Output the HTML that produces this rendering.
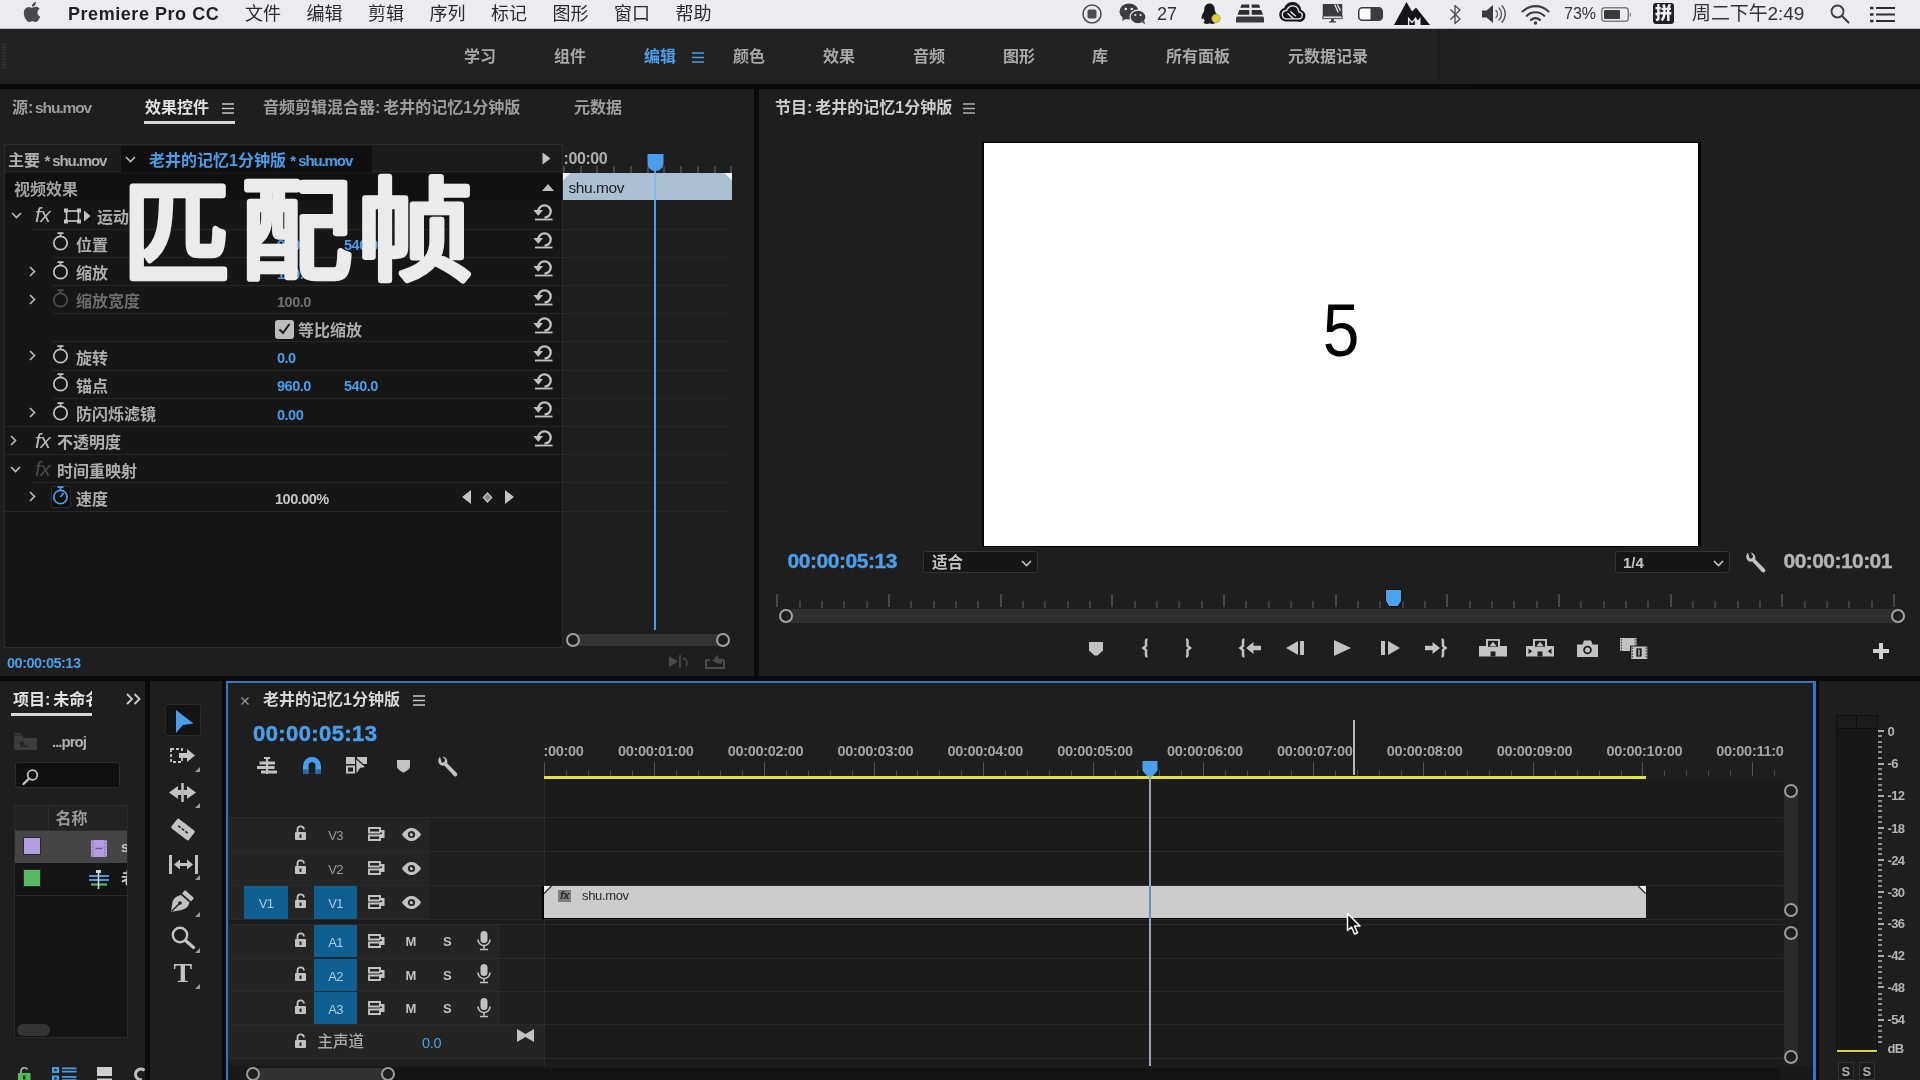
<!DOCTYPE html>
<html lang="zh-CN">
<head>
<meta charset="utf-8">
<title>Premiere Pro CC</title>
<style>
*{box-sizing:border-box;margin:0;padding:0}
html,body{width:1920px;height:1080px;overflow:hidden;background:#0b0a0a}
body{position:relative;font-family:"Liberation Sans","Noto Sans CJK SC",sans-serif;color:#a9a9a9;font-size:15px}
.a{position:absolute}
body>*{will-change:transform}
.t{position:absolute;white-space:nowrap;line-height:1}
.cj{font-family:"Liberation Sans","Noto Sans CJK SC",sans-serif}
svg{position:absolute;overflow:visible}
/* menubar */
#menubar{left:0;top:0;width:1920px;height:29px;background:#ececee;border-bottom:1px solid #bdbdbf}
#menubar .t{color:#2a2a2a;font-size:18px;top:5px}
/* workspace bar */
#wsbar{left:0;top:29px;width:1920px;height:55px;background:#222}
#wsbar .t{font-size:16px;font-weight:700;color:#a8a8a8;top:20px}
/* panels */
.panel{background:#1e1e1e}
.tab{font-size:16px;font-weight:700;color:#9d9d9d;word-spacing:-1.5px}
.lbl{font-size:16px;font-weight:700;color:#aeaeae}
.lat{letter-spacing:-1.1px;font-size:15px}
.val{font-size:14.5px;font-weight:700;color:#4a9eea;letter-spacing:-0.5px}
.blue{color:#4a9eea}
</style>
</head>
<body>
<!-- ===== MENUBAR ===== -->
<div id="menubar" class="a">
<svg style="left:22px;top:2px" width="20" height="20" viewBox="0 0 24 24"><path fill="#4a4a4a" d="M12.152 6.896c-.948 0-2.415-1.078-3.960-1.040-2.040.027-3.910 1.183-4.961 3.014-2.117 3.675-.546 9.103 1.519 12.090 1.013 1.454 2.208 3.090 3.792 3.039 1.520-.065 2.090-.987 3.935-.987 1.831 0 2.350.987 3.960.948 1.637-.026 2.676-1.480 3.676-2.948 1.156-1.688 1.636-3.325 1.662-3.415-.039-.013-3.182-1.221-3.220-4.857-.026-3.040 2.480-4.494 2.597-4.559-1.429-2.090-3.623-2.324-4.390-2.376-2-.156-3.675 1.090-4.610 1.090zM15.530 3.830c.843-1.012 1.400-2.427 1.245-3.830-1.207.052-2.662.805-3.532 1.818-.780.896-1.454 2.338-1.273 3.714 1.338.104 2.715-.688 3.559-1.701"/></svg>
<span class="t" style="left:68px;top:5px;font-weight:700;font-size:18px;letter-spacing:0.55px;color:#1f1f1f">Premiere Pro CC</span>
<span class="t" style="left:245px">文件</span>
<span class="t" style="left:306.500px">编辑</span>
<span class="t" style="left:368px">剪辑</span>
<span class="t" style="left:429.500px">序列</span>
<span class="t" style="left:491px">标记</span>
<span class="t" style="left:552.500px">图形</span>
<span class="t" style="left:614px">窗口</span>
<span class="t" style="left:675.500px">帮助</span>

<!-- record -->
<svg style="left:1081px;top:3px" width="22" height="22" viewBox="0 0 22 22"><circle cx="11" cy="11" r="9" fill="none" stroke="#4d4d4d" stroke-width="1.500"/><rect x="6.500" y="6.500" width="9" height="9" rx="2" fill="#4d4d4d"/></svg>
<!-- wechat -->
<svg style="left:1119px;top:3px" width="28" height="22" viewBox="0 0 28 22"><ellipse cx="10" cy="8.500" rx="9.500" ry="8" fill="#3c3c3c"/><path d="M4 14l-1 4 4.500-2.500z" fill="#3c3c3c"/><ellipse cx="19" cy="14" rx="8" ry="6.800" fill="#3c3c3c" stroke="#ececee" stroke-width="1.200"/><path d="M23 19l3 2.500-.8-4z" fill="#3c3c3c"/><circle cx="6.800" cy="6" r="1.300" fill="#ececee"/><circle cx="12.800" cy="6" r="1.300" fill="#ececee"/><circle cx="16.300" cy="12" r="1.100" fill="#ececee"/><circle cx="21.500" cy="12" r="1.100" fill="#ececee"/></svg>
<span class="t" style="left:1157px;top:5px;font-size:18px;color:#333">27</span>
<!-- qq -->
<svg style="left:1199px;top:2px" width="24" height="24" viewBox="0 0 24 24"><path d="M10.500 1.500c3.200 0 5.200 2.500 5.200 6 0 1 .3 1.800.8 2.800 1 1.800 2 3.700 2 5.700 0 .9-.4 1.300-.8 1.200-.4-.1-.8-.7-1.100-1.300-.3 1.300-.9 2.300-1.700 3.100.9.400 1.500.9 1.500 1.500 0 .9-1.600 1.400-3.300 1.400-1.100 0-2-.2-2.600-.6-.6.400-1.500.6-2.600.6-1.700 0-3.300-.5-3.300-1.400 0-.6.600-1.100 1.500-1.500-.8-.8-1.400-1.800-1.700-3.100-.3.600-.7 1.200-1.100 1.300-.4.100-.8-.3-.8-1.200 0-2 1-3.900 2-5.700.5-1 .8-1.800.8-2.800 0-3.500 2-6 5.200-6z" fill="#1a1a1a"/><circle cx="17" cy="16.500" r="4.200" fill="#e6cf2a"/><circle cx="17" cy="16.500" r="4.200" fill="none" stroke="#9a9a80" stroke-width="0.800"/></svg>
<!-- keyboard-ish -->
<svg style="left:1236px;top:4px" width="28" height="19" viewBox="0 0 28 19"><path d="M5.500 .5h7.800v3.200H4.300zM15.700 .5h7.300l1.200 3.200h-8.500zM3.300 6h10v4.800H1.500zM15.700 6h9.500l1.800 4.800H15.700z" fill="#2e2e2e"/><path d="M0.800 12.500h26.400l.8 1.500v4.500H0V14z" fill="#3a3a3a"/></svg>
<!-- creative cloud -->
<svg style="left:1278px;top:4px" width="26" height="18" viewBox="0 0 26 18"><path d="M8 17.600a7 7 0 0 1-1.800-13.700A8.800 8.800 0 0 1 23.300 6 6.100 6.100 0 0 1 19.500 17.600z" fill="#161616"/><path d="M8.300 14.800a4.200 4.200 0 0 1-.7-8.300l1.200-.3.500-1.100a6 6 0 0 1 11.200 1.400l.3 1.300.9.400a3.400 3.400 0 0 1-1.700 6.600z" fill="none" stroke="#ececee" stroke-width="1.300"/><path d="M9.500 9.200l6 5.600M12.300 7.300l5.500 5" stroke="#ececee" stroke-width="1.300"/></svg>
<!-- display -->
<svg style="left:1321px;top:4px" width="23" height="19.500" viewBox="0 0 24 22"><path d="M1 0h22v13.500H1z" fill="#3a3a3a"/><path d="M1 13.500h22v3H1z" fill="#d8d8da" stroke="#3a3a3a" stroke-width="1"/><path d="M14.500 0.500l4 9M17.500 0.500l3.500 7" stroke="#ececee" stroke-width="1.400"/><path d="M10.500 16.500h3v3h2.500v1.500h-8v-1.500h2.500z" fill="#3a3a3a"/></svg>
<!-- toggle -->
<svg style="left:1358px;top:7px" width="25" height="14" viewBox="0 0 25 14"><rect x="0.750" y="0.750" width="23.500" height="12.500" rx="3.500" fill="#fafafa" stroke="#3c3c3c" stroke-width="1.500"/><path d="M12.500 1h8a3.500 3.500 0 0 1 3.500 3.500v5a3.500 3.500 0 0 1-3.500 3.500h-8z" fill="#3c3c3c"/></svg>
<!-- mountain M -->
<svg style="left:1394px;top:2px" width="36" height="23" viewBox="0 0 36 23"><path d="M0 23L12.500 0l5.500 9.500 4-4L36 23h-9.500v-8l-2.600 3.500-2.600-3.500v8z" fill="#141414"/><path d="M14.600 23v-6.500l3.400 4 3.400-4V23" fill="none" stroke="#ececee" stroke-width="1.300"/></svg>
<!-- bluetooth -->
<svg style="left:1449px;top:4px" width="13" height="21" viewBox="0 0 13 21"><path d="M1.500 5.500l9.500 9.500-5 4.500V1.500l5 4.500-9.500 9.500" fill="none" stroke="#4a4a4a" stroke-width="1.300" stroke-linejoin="round"/></svg>
<!-- volume -->
<svg style="left:1482px;top:5px" width="24" height="18" viewBox="0 0 24 18"><path d="M0 5.500h4.500L11 0v18l-6.500-5.500H0z" fill="#3c3c3c"/><path d="M14 5.500a5 5 0 0 1 0 7M17 3a8.500 8.500 0 0 1 0 12M20 .8a12 12 0 0 1 0 16.400" fill="none" stroke="#5a5a5a" stroke-width="1.400" stroke-linecap="round"/></svg>
<!-- wifi -->
<svg style="left:1521px;top:5px" width="29" height="20" viewBox="0 0 29 20"><path d="M1.500 6.500a18.500 18.500 0 0 1 26 0M5.800 10.800a12.300 12.300 0 0 1 17.400 0M10 15a6.400 6.400 0 0 1 9 0" fill="none" stroke="#3c3c3c" stroke-width="2.100" stroke-linecap="round"/><circle cx="14.500" cy="18" r="1.700" fill="#3c3c3c"/></svg>
<span class="t" style="left:1564px;top:6px;font-size:16px;color:#333">73%</span>
<!-- battery -->
<svg style="left:1601px;top:7px" width="31" height="15" viewBox="0 0 31 15"><rect x="0.750" y="0.750" width="26.500" height="13.500" rx="3" fill="none" stroke="#7d7d7d" stroke-width="1.500"/><rect x="3" y="3" width="16" height="9" rx="1" fill="#3a3a3a"/><path d="M28.800 5a3 3 0 0 1 0 5z" fill="#7d7d7d"/></svg>
<!-- pinyin -->
<svg style="left:1653px;top:3px" width="21" height="21" viewBox="0 0 21 21"><rect width="21" height="21" rx="3" fill="#222"/></svg>
<span class="t" style="left:1655px;top:5px;font-size:17px;font-weight:900;color:#f2f2f2">拼</span>
<span class="t" style="left:1692px;top:4px;font-size:19px;letter-spacing:-0.100px;color:#333">周二下午2:49</span>
<!-- search -->
<svg style="left:1830px;top:4px" width="20" height="20" viewBox="0 0 20 20"><circle cx="7.500" cy="7.500" r="6" fill="none" stroke="#3c3c3c" stroke-width="1.800"/><path d="M12 12l6.500 6.500" stroke="#3c3c3c" stroke-width="2" stroke-linecap="round"/></svg>
<!-- list -->
<svg style="left:1870px;top:6px" width="25" height="17" viewBox="0 0 25 17"><path d="M6 2h19M6 8.500h19M6 15h19" stroke="#2e2e2e" stroke-width="2.200"/><path d="M0 2h3.500M0 8.500h3.500M0 15h3.500" stroke="#2e2e2e" stroke-width="2.600"/></svg>

</div>
<!-- ===== WORKSPACE BAR ===== -->
<div id="wsbar" class="a">
<svg style="left:2px;top:14px" width="4" height="26" viewBox="0 0 4 26"><path d="M0 1h4M0 4h4M0 7h4M0 10h4M0 13h4M0 16h4M0 19h4M0 22h4M0 25h4" stroke="#3a3a3a" stroke-width="1"/></svg>
<span class="t" style="left:464px">学习</span>
<span class="t" style="left:554px">组件</span>
<span class="t" style="left:644px;color:#4a9eea">编辑</span>
<svg style="left:692px;top:23px" width="12" height="11" viewBox="0 0 12 11"><path d="M0 1h12M0 5.500h12M0 10h12" stroke="#4a9eea" stroke-width="1.600"/></svg>
<span class="t" style="left:733px">颜色</span>
<span class="t" style="left:823px">效果</span>
<span class="t" style="left:913px">音频</span>
<span class="t" style="left:1003px">图形</span>
<span class="t" style="left:1092px">库</span>
<span class="t" style="left:1166px">所有面板</span>
<span class="t" style="left:1288px">元数据记录</span>
<div class="a" style="left:1438px;top:0;width:1px;height:53px;background:#151515"></div>
<div class="a" style="left:1439px;top:0;width:39px;height:53px;background:#202020"></div>
</div>
<!-- ===== EFFECT CONTROLS PANEL ===== -->
<div id="ec" class="a panel" style="left:0;top:89px;width:754px;height:587px;overflow:hidden">
<span class="t tab" style="left:12px;top:11px;">源:<span class="lat" style="font-size:15.5px"> shu.mov</span></span>
<span class="t tab" style="left:145px;top:11px;color:#e2e2e2">效果控件</span>
<svg style="left:222px;top:14px" width="12" height="11" viewBox="0 0 12 11"><path d="M0 1h12M0 5.500h12M0 10h12" stroke="#c8c8c8" stroke-width="1.500"/></svg>
<div class="a" style="left:144px;top:32px;width:91px;height:3px;background:#d6d6d6"></div>
<span class="t tab" style="left:263px;top:11px">音频剪辑混合器: 老井的记忆1分钟版</span>
<span class="t tab" style="left:574px;top:11px">元数据</span>
<div class="a" style="left:4px;top:55px;width:559px;height:504px;border:1px solid #2b2b2b;background:#161616"></div>
<div class="a" style="left:5px;top:56px;width:557px;height:27px;background:#1b1b1b;border-bottom:1px solid #272727"></div>
<div class="a" style="left:121px;top:57px;width:251px;height:26px;background:#0f0f0f"></div>
<span class="t lbl" style="left:8px;top:64px">主要 <span class="lat">* shu.mov</span></span>
<svg style="left:125px;top:66.5px" width="11" height="7" viewBox="0 0 11 7"><path d="M1 1l4.500 4.500L10 1" fill="none" stroke="#c0c0c0" stroke-width="1.600"/></svg>
<span class="t lbl" style="left:149px;top:64px;color:#4a9eea">老井的记忆1分钟版 <span class="lat">* shu.mov</span></span>
<svg style="left:542px;top:62.5px" width="9" height="13" viewBox="0 0 9 13"><path d="M0.500 0.500l8 6-8 6z" fill="#c4c4c4"/></svg>
<div class="a" style="left:5px;top:85px;width:557px;height:26px;background:#101010"></div>
<span class="t" style="left:14px;top:93px;font-size:16px;font-weight:700;color:#a2a2a2">视频效果</span>
<svg style="left:542px;top:95px" width="12" height="7" viewBox="0 0 12 7"><path d="M0 7l6-7 6 7z" fill="#bdbdbd"/></svg>
<svg style="left:11px;top:122.7px" width="11" height="7" viewBox="0 0 11 7"><path d="M1 1l4.500 4.500L10 1" fill="none" stroke="#bdbdbd" stroke-width="1.600"/></svg>
<span class="t" style="left:35px;top:115.2px;font-size:21px;font-style:italic;color:#bdbdbd;letter-spacing:-0.5px;font-family:'Liberation Sans',sans-serif">fx</span>
<svg style="left:64px;top:119.2px" width="27" height="16" viewBox="0 0 27 16"><rect x="2.500" y="3" width="12" height="10" fill="none" stroke="#c4c4c4" stroke-width="1.600"/><path d="M0 .5h4v4H0zM13 .5h4v4h-4zM0 11.500h4v4H0zM13 11.500h4v4h-4z" fill="#c4c4c4"/><path d="M20 2.500l6.500 5.500-6.500 5.500z" fill="#c4c4c4"/></svg>
<span class="t lbl" style="left:97px;top:120.7px;">运动</span>
<svg style="left:533px;top:113.9px" width="20" height="18" viewBox="0 0 20 18"><path d="M5.300 8.500A6.200 6.200 0 1 1 11.500 14.700" fill="none" stroke="#c2c2c2" stroke-width="2.300"/><path d="M0.300 7h9.700l-4.700 5.800z" fill="#c2c2c2"/><path d="M2 16.500h17.500" stroke="#c2c2c2" stroke-width="1.800"/></svg>
<div class="a" style="left:32px;top:140px;width:530px;height:1px;background:#272727"></div>
<svg style="left:52px;top:143.4px" width="17" height="19" viewBox="0 0 17 19"><circle cx="8.500" cy="11" r="6.700" fill="none" stroke="#c4c4c4" stroke-width="1.700"/><path d="M5.500 1.200h6M8.500 1.200v3" stroke="#c4c4c4" stroke-width="1.700" fill="none"/></svg>
<span class="t lbl" style="left:76px;top:148.9px;">位置</span>
<span class="t val" style="left:277px;top:149.4px;">960.0</span>
<span class="t val" style="left:344px;top:149.4px;">540.0</span>
<svg style="left:533px;top:142.1px" width="20" height="18" viewBox="0 0 20 18"><path d="M5.300 8.500A6.200 6.200 0 1 1 11.500 14.700" fill="none" stroke="#c2c2c2" stroke-width="2.300"/><path d="M0.300 7h9.700l-4.700 5.800z" fill="#c2c2c2"/><path d="M2 16.500h17.500" stroke="#c2c2c2" stroke-width="1.800"/></svg>
<div class="a" style="left:52px;top:168px;width:510px;height:1px;background:#272727"></div>
<svg style="left:29px;top:176.6px" width="7" height="11" viewBox="0 0 7 11"><path d="M1 1l4.500 4.500L1 10" fill="none" stroke="#bdbdbd" stroke-width="1.600"/></svg>
<svg style="left:52px;top:171.6px" width="17" height="19" viewBox="0 0 17 19"><circle cx="8.500" cy="11" r="6.700" fill="none" stroke="#c4c4c4" stroke-width="1.700"/><path d="M5.500 1.200h6M8.500 1.200v3" stroke="#c4c4c4" stroke-width="1.700" fill="none"/></svg>
<span class="t lbl" style="left:76px;top:177.1px;">缩放</span>
<span class="t val" style="left:277px;top:177.6px;">100.0</span>
<svg style="left:533px;top:170.3px" width="20" height="18" viewBox="0 0 20 18"><path d="M5.300 8.500A6.200 6.200 0 1 1 11.500 14.700" fill="none" stroke="#c2c2c2" stroke-width="2.300"/><path d="M0.300 7h9.700l-4.700 5.800z" fill="#c2c2c2"/><path d="M2 16.500h17.500" stroke="#c2c2c2" stroke-width="1.800"/></svg>
<div class="a" style="left:52px;top:196px;width:510px;height:1px;background:#272727"></div>
<svg style="left:29px;top:204.8px" width="7" height="11" viewBox="0 0 7 11"><path d="M1 1l4.500 4.500L1 10" fill="none" stroke="#bdbdbd" stroke-width="1.600"/></svg>
<svg style="left:52px;top:199.8px" width="17" height="19" viewBox="0 0 17 19"><circle cx="8.500" cy="11" r="6.700" fill="none" stroke="#4e4e4e" stroke-width="1.700"/><path d="M5.500 1.200h6M8.500 1.200v3" stroke="#4e4e4e" stroke-width="1.700" fill="none"/></svg>
<span class="t lbl" style="left:76px;top:205.3px;color:#6c6c6c;">缩放宽度</span>
<span class="t val" style="left:277px;top:205.8px;color:#707070;">100.0</span>
<svg style="left:533px;top:198.5px" width="20" height="18" viewBox="0 0 20 18"><path d="M5.300 8.500A6.200 6.200 0 1 1 11.500 14.700" fill="none" stroke="#c2c2c2" stroke-width="2.300"/><path d="M0.300 7h9.700l-4.700 5.800z" fill="#c2c2c2"/><path d="M2 16.500h17.500" stroke="#c2c2c2" stroke-width="1.800"/></svg>
<div class="a" style="left:52px;top:224px;width:510px;height:1px;background:#272727"></div>
<div class="a" style="left:275px;top:231.0px;width:19px;height:19px;border-radius:3px;background:#bcbcbc"></div>
<svg style="left:278px;top:234.0px" width="13" height="12" viewBox="0 0 13 12"><path d="M1.500 6.500l3.500 3.500 6.500-9" fill="none" stroke="#1c1c1c" stroke-width="2.100"/></svg>
<span class="t lbl" style="left:298px;top:233.5px;">等比缩放</span>
<svg style="left:533px;top:226.7px" width="20" height="18" viewBox="0 0 20 18"><path d="M5.300 8.500A6.200 6.200 0 1 1 11.500 14.700" fill="none" stroke="#c2c2c2" stroke-width="2.300"/><path d="M0.300 7h9.700l-4.700 5.800z" fill="#c2c2c2"/><path d="M2 16.500h17.500" stroke="#c2c2c2" stroke-width="1.800"/></svg>
<div class="a" style="left:52px;top:252px;width:510px;height:1px;background:#272727"></div>
<svg style="left:29px;top:261.2px" width="7" height="11" viewBox="0 0 7 11"><path d="M1 1l4.500 4.500L1 10" fill="none" stroke="#bdbdbd" stroke-width="1.600"/></svg>
<svg style="left:52px;top:256.2px" width="17" height="19" viewBox="0 0 17 19"><circle cx="8.500" cy="11" r="6.700" fill="none" stroke="#c4c4c4" stroke-width="1.700"/><path d="M5.500 1.200h6M8.500 1.200v3" stroke="#c4c4c4" stroke-width="1.700" fill="none"/></svg>
<span class="t lbl" style="left:76px;top:261.7px;">旋转</span>
<span class="t val" style="left:277px;top:262.2px;">0.0</span>
<svg style="left:533px;top:254.9px" width="20" height="18" viewBox="0 0 20 18"><path d="M5.300 8.500A6.200 6.200 0 1 1 11.500 14.700" fill="none" stroke="#c2c2c2" stroke-width="2.300"/><path d="M0.300 7h9.700l-4.700 5.800z" fill="#c2c2c2"/><path d="M2 16.500h17.500" stroke="#c2c2c2" stroke-width="1.800"/></svg>
<div class="a" style="left:52px;top:281px;width:510px;height:1px;background:#272727"></div>
<svg style="left:52px;top:284.4px" width="17" height="19" viewBox="0 0 17 19"><circle cx="8.500" cy="11" r="6.700" fill="none" stroke="#c4c4c4" stroke-width="1.700"/><path d="M5.500 1.200h6M8.500 1.200v3" stroke="#c4c4c4" stroke-width="1.700" fill="none"/></svg>
<span class="t lbl" style="left:76px;top:289.9px;">锚点</span>
<span class="t val" style="left:277px;top:290.4px;">960.0</span>
<span class="t val" style="left:344px;top:290.4px;">540.0</span>
<svg style="left:533px;top:283.1px" width="20" height="18" viewBox="0 0 20 18"><path d="M5.300 8.500A6.200 6.200 0 1 1 11.500 14.700" fill="none" stroke="#c2c2c2" stroke-width="2.300"/><path d="M0.300 7h9.700l-4.700 5.800z" fill="#c2c2c2"/><path d="M2 16.500h17.500" stroke="#c2c2c2" stroke-width="1.800"/></svg>
<div class="a" style="left:52px;top:309px;width:510px;height:1px;background:#272727"></div>
<svg style="left:29px;top:317.6px" width="7" height="11" viewBox="0 0 7 11"><path d="M1 1l4.500 4.500L1 10" fill="none" stroke="#bdbdbd" stroke-width="1.600"/></svg>
<svg style="left:52px;top:312.6px" width="17" height="19" viewBox="0 0 17 19"><circle cx="8.500" cy="11" r="6.700" fill="none" stroke="#c4c4c4" stroke-width="1.700"/><path d="M5.500 1.200h6M8.500 1.200v3" stroke="#c4c4c4" stroke-width="1.700" fill="none"/></svg>
<span class="t lbl" style="left:76px;top:318.1px;">防闪烁滤镜</span>
<span class="t val" style="left:277px;top:318.6px;">0.00</span>
<svg style="left:533px;top:311.3px" width="20" height="18" viewBox="0 0 20 18"><path d="M5.300 8.500A6.200 6.200 0 1 1 11.500 14.700" fill="none" stroke="#c2c2c2" stroke-width="2.300"/><path d="M0.300 7h9.700l-4.700 5.800z" fill="#c2c2c2"/><path d="M2 16.500h17.500" stroke="#c2c2c2" stroke-width="1.800"/></svg>
<div class="a" style="left:5px;top:337px;width:557px;height:1px;background:#272727"></div>
<svg style="left:10px;top:345.8px" width="7" height="11" viewBox="0 0 7 11"><path d="M1 1l4.500 4.500L1 10" fill="none" stroke="#bdbdbd" stroke-width="1.600"/></svg>
<span class="t" style="left:35px;top:340.8px;font-size:21px;font-style:italic;color:#bdbdbd;letter-spacing:-0.5px;font-family:'Liberation Sans',sans-serif">fx</span>
<span class="t lbl" style="left:57px;top:346.3px;">不透明度</span>
<svg style="left:533px;top:339.5px" width="20" height="18" viewBox="0 0 20 18"><path d="M5.300 8.500A6.200 6.200 0 1 1 11.500 14.700" fill="none" stroke="#c2c2c2" stroke-width="2.300"/><path d="M0.300 7h9.700l-4.700 5.800z" fill="#c2c2c2"/><path d="M2 16.500h17.500" stroke="#c2c2c2" stroke-width="1.800"/></svg>
<div class="a" style="left:5px;top:365px;width:557px;height:1px;background:#272727"></div>
<svg style="left:10px;top:376.5px" width="11" height="7" viewBox="0 0 11 7"><path d="M1 1l4.500 4.500L10 1" fill="none" stroke="#bdbdbd" stroke-width="1.600"/></svg>
<span class="t" style="left:35px;top:369.0px;font-size:21px;font-style:italic;color:#4a4a4a;letter-spacing:-0.5px;font-family:'Liberation Sans',sans-serif">fx</span>
<span class="t lbl" style="left:57px;top:374.5px;">时间重映射</span>
<div class="a" style="left:32px;top:393px;width:530px;height:1px;background:#272727"></div>
<svg style="left:29px;top:402.2px" width="7" height="11" viewBox="0 0 7 11"><path d="M1 1l4.500 4.500L1 10" fill="none" stroke="#bdbdbd" stroke-width="1.600"/></svg>
<div class="a" style="left:51px;top:396.7px;width:20px;height:22px;background:#0f0f0f;border:1px solid #2e2e2e;border-radius:2px"></div>
<svg style="left:52px;top:396.7px" width="17" height="19" viewBox="0 0 17 19"><circle cx="8.500" cy="11" r="6.700" fill="none" stroke="#4a9eea" stroke-width="1.700"/><path d="M5.500 1.200h6M8.500 1.200v3M8.500 11l3-4" stroke="#4a9eea" stroke-width="1.700" fill="none"/></svg>
<span class="t lbl" style="left:76px;top:402.7px;">速度</span>
<span class="t val" style="left:275px;top:403.2px;color:#c6c6c6;">100.00%</span>
<svg style="left:462px;top:401.2px" width="9" height="14" viewBox="0 0 9 14"><path d="M9 0L0 7l9 7z" fill="#c4c4c4"/></svg>
<svg style="left:482px;top:402.7px" width="11" height="11" viewBox="0 0 11 11"><path d="M5.500 .8l4.200 4.700-4.200 4.700-4.200-4.700z" fill="#8a8a8a" stroke="#c4c4c4" stroke-width="1.200"/></svg>
<svg style="left:505px;top:401.2px" width="9" height="14" viewBox="0 0 9 14"><path d="M0 0l9 7-9 7z" fill="#c4c4c4"/></svg>
<div class="a" style="left:5px;top:422px;width:557px;height:1px;background:#272727"></div>
<span class="t" style="left:563.500px;top:62px;font-size:16px;font-weight:700;color:#b0b0b0;letter-spacing:-0.4px">:00:00</span>
<div class="a" style="left:563px;top:76.5px;width:2px;height:7px;background:#454545"></div><div class="a" style="left:580px;top:76.5px;width:2px;height:7px;background:#454545"></div><div class="a" style="left:596px;top:76.5px;width:2px;height:7px;background:#454545"></div><div class="a" style="left:613px;top:76.5px;width:2px;height:7px;background:#454545"></div><div class="a" style="left:630px;top:76.5px;width:2px;height:7px;background:#454545"></div><div class="a" style="left:647px;top:76.5px;width:2px;height:7px;background:#454545"></div><div class="a" style="left:663px;top:76.5px;width:2px;height:7px;background:#454545"></div><div class="a" style="left:680px;top:76.5px;width:2px;height:7px;background:#454545"></div><div class="a" style="left:697px;top:76.5px;width:2px;height:7px;background:#454545"></div><div class="a" style="left:714px;top:76.5px;width:2px;height:7px;background:#454545"></div><div class="a" style="left:730px;top:76.5px;width:2px;height:7px;background:#454545"></div>
<div class="a" style="left:563px;top:84px;width:169px;height:27px;background:#abc1d3"></div>
<svg style="left:563px;top:84px" width="169" height="8" viewBox="0 0 169 8"><path d="M0 0h7.500L0 7.500z" fill="#f2f2f2"/><path d="M169 0h-7.500l7.500 7.500z" fill="#f2f2f2"/></svg>
<span class="t" style="left:568.500px;top:90.5px;font-size:15.500px;color:#1c1c1c;letter-spacing:-0.45px">shu.mov</span>
<div class="a" style="left:563px;top:140px;width:169px;height:1px;background:#262626"></div>
<div class="a" style="left:563px;top:168px;width:169px;height:1px;background:#262626"></div>
<div class="a" style="left:563px;top:196px;width:169px;height:1px;background:#262626"></div>
<div class="a" style="left:563px;top:224px;width:169px;height:1px;background:#262626"></div>
<div class="a" style="left:563px;top:252px;width:169px;height:1px;background:#262626"></div>
<div class="a" style="left:563px;top:281px;width:169px;height:1px;background:#262626"></div>
<div class="a" style="left:563px;top:309px;width:169px;height:1px;background:#262626"></div>
<div class="a" style="left:563px;top:337px;width:169px;height:1px;background:#262626"></div>
<div class="a" style="left:563px;top:365px;width:169px;height:1px;background:#262626"></div>
<div class="a" style="left:563px;top:393px;width:169px;height:1px;background:#262626"></div>
<div class="a" style="left:563px;top:422px;width:169px;height:1px;background:#262626"></div>
<svg style="left:647px;top:65px" width="17" height="17" viewBox="0 0 17 17"><path d="M0.500 0h16v9.500c0 4-3.500 7.500-8 7.500s-8-3.500-8-7.500z" fill="#4a9eea"/></svg>
<div class="a" style="left:653.500px;top:79px;width:2.500px;height:462px;background:#4a9eea"></div>
<div class="a" style="left:653.500px;top:84px;width:2.500px;height:27px;background:#86b9ea"></div>
<div class="a" style="left:568px;top:545px;width:160px;height:12px;border-radius:6px;background:#333"></div>
<div class="a" style="left:566px;top:544px;width:14px;height:14px;border-radius:7px;border:2.800px solid #a2a2a2;background:#1e1e1e"></div>
<div class="a" style="left:716px;top:544px;width:14px;height:14px;border-radius:7px;border:2.800px solid #a2a2a2;background:#1e1e1e"></div>
<span class="t" style="left:7px;top:567px;font-size:14.500px;font-weight:700;color:#4a9eea;letter-spacing:-0.5px">00:00:05:13</span>
<svg style="left:669px;top:566px" width="20" height="14" viewBox="0 0 20 14"><path d="M0 1l9 5.500-9 5.500z" fill="#4a4a4a"/><path d="M11 0v13M14 3a5 5 0 0 1 3 8" stroke="#4a4a4a" stroke-width="1.600" fill="none"/></svg>
<svg style="left:705px;top:565px" width="20" height="15" viewBox="0 0 20 15"><path d="M1 6v8h18V6M5 6h-4M19 6h-4" fill="none" stroke="#4a4a4a" stroke-width="2"/><path d="M7 7l6-6.500v4h4v5h-4v0z" fill="#4a4a4a"/></svg>
</div>
<!-- ===== PROGRAM MONITOR ===== -->
<div id="pm" class="a panel" style="left:759px;top:89px;width:1161px;height:587px;overflow:hidden">
<span class="t tab" style="left:16px;top:11px;color:#cdcdcd">节目: 老井的记忆1分钟版</span>
<svg style="left:204px;top:14px" width="12" height="11" viewBox="0 0 12 11"><path d="M0 1h12M0 5.500h12M0 10h12" stroke="#b0b0b0" stroke-width="1.500"/></svg>
<div class="a" style="left:222.5px;top:53.3px;width:719px;height:404.600px;background:#000"></div>
<div class="a" style="left:224.5px;top:54.3px;width:714.800px;height:402.400px;background:#fff"></div>
<span class="t" style="left:542.3px;top:205px;width:80px;text-align:center;font-size:74.500px;color:#000;transform:scaleX(0.885);font-family:'Liberation Sans',sans-serif">5</span>
<span class="t" style="left:28.5px;top:460.5px;font-size:21px;font-weight:700;color:#4a9eea;-webkit-text-stroke:0.4px #4a9eea;letter-spacing:-0.45px">00:00:05:13</span>
<div class="a" style="left:164px;top:462px;width:115px;height:22px;background:#161616;border:1px solid #343434;border-radius:3px"></div>
<span class="t" style="left:173px;top:465.5px;font-size:15.5px;font-weight:700;color:#c4c4c4">适合</span>
<svg style="left:262px;top:470.5px" width="11" height="7" viewBox="0 0 11 7"><path d="M1 1l4.500 4.500L10 1" fill="none" stroke="#c4c4c4" stroke-width="1.600"/></svg>
<div class="a" style="left:856px;top:462px;width:115px;height:22px;background:#161616;border:1px solid #343434;border-radius:3px"></div>
<span class="t" style="left:864px;top:465.5px;font-size:15px;font-weight:700;color:#c4c4c4">1/4</span>
<svg style="left:954px;top:470.5px" width="11" height="7" viewBox="0 0 11 7"><path d="M1 1l4.500 4.500L10 1" fill="none" stroke="#c4c4c4" stroke-width="1.600"/></svg>
<svg style="left:987px;top:462.5px" width="21" height="21" viewBox="0 0 21 21"><path d="M2 .8a5.200 5.200 0 0 0 1.500 8.700c.9.300 1.900.3 2.800.1l9.500 10.200a2 2 0 0 0 3-2.800L9.200 7.200c.5-1.700 0-3.700-1.400-5.100A5.200 5.200 0 0 0 4.500.4l2.600 3-.7 2.600-2.600.7z" fill="#c2c2c2"/></svg>
<span class="t" style="left:1024.5px;top:460.5px;font-size:21px;font-weight:700;color:#b4b4b4;-webkit-text-stroke:0.4px #b4b4b4;letter-spacing:-0.55px">00:00:10:01</span>
<div class="a" style="left:17px;top:505px;width:2px;height:13px;background:#484848"></div><div class="a" style="left:40px;top:512px;width:2px;height:6.500px;background:#3e3e3e"></div><div class="a" style="left:62px;top:512px;width:2px;height:6.500px;background:#3e3e3e"></div><div class="a" style="left:84px;top:512px;width:2px;height:6.500px;background:#3e3e3e"></div><div class="a" style="left:107px;top:512px;width:2px;height:6.500px;background:#3e3e3e"></div><div class="a" style="left:129px;top:505px;width:2px;height:13px;background:#484848"></div><div class="a" style="left:151px;top:512px;width:2px;height:6.500px;background:#3e3e3e"></div><div class="a" style="left:174px;top:512px;width:2px;height:6.500px;background:#3e3e3e"></div><div class="a" style="left:196px;top:512px;width:2px;height:6.500px;background:#3e3e3e"></div><div class="a" style="left:218px;top:512px;width:2px;height:6.500px;background:#3e3e3e"></div><div class="a" style="left:241px;top:505px;width:2px;height:13px;background:#484848"></div><div class="a" style="left:263px;top:512px;width:2px;height:6.500px;background:#3e3e3e"></div><div class="a" style="left:285px;top:512px;width:2px;height:6.500px;background:#3e3e3e"></div><div class="a" style="left:308px;top:512px;width:2px;height:6.500px;background:#3e3e3e"></div><div class="a" style="left:330px;top:512px;width:2px;height:6.500px;background:#3e3e3e"></div><div class="a" style="left:352px;top:505px;width:2px;height:13px;background:#484848"></div><div class="a" style="left:375px;top:512px;width:2px;height:6.500px;background:#3e3e3e"></div><div class="a" style="left:397px;top:512px;width:2px;height:6.500px;background:#3e3e3e"></div><div class="a" style="left:419px;top:512px;width:2px;height:6.500px;background:#3e3e3e"></div><div class="a" style="left:442px;top:512px;width:2px;height:6.500px;background:#3e3e3e"></div><div class="a" style="left:464px;top:505px;width:2px;height:13px;background:#484848"></div><div class="a" style="left:486px;top:512px;width:2px;height:6.500px;background:#3e3e3e"></div><div class="a" style="left:509px;top:512px;width:2px;height:6.500px;background:#3e3e3e"></div><div class="a" style="left:531px;top:512px;width:2px;height:6.500px;background:#3e3e3e"></div><div class="a" style="left:553px;top:512px;width:2px;height:6.500px;background:#3e3e3e"></div><div class="a" style="left:576px;top:505px;width:2px;height:13px;background:#484848"></div><div class="a" style="left:598px;top:512px;width:2px;height:6.500px;background:#3e3e3e"></div><div class="a" style="left:620px;top:512px;width:2px;height:6.500px;background:#3e3e3e"></div><div class="a" style="left:643px;top:512px;width:2px;height:6.500px;background:#3e3e3e"></div><div class="a" style="left:665px;top:512px;width:2px;height:6.500px;background:#3e3e3e"></div><div class="a" style="left:687px;top:505px;width:2px;height:13px;background:#484848"></div><div class="a" style="left:710px;top:512px;width:2px;height:6.500px;background:#3e3e3e"></div><div class="a" style="left:732px;top:512px;width:2px;height:6.500px;background:#3e3e3e"></div><div class="a" style="left:754px;top:512px;width:2px;height:6.500px;background:#3e3e3e"></div><div class="a" style="left:777px;top:512px;width:2px;height:6.500px;background:#3e3e3e"></div><div class="a" style="left:799px;top:505px;width:2px;height:13px;background:#484848"></div><div class="a" style="left:821px;top:512px;width:2px;height:6.500px;background:#3e3e3e"></div><div class="a" style="left:844px;top:512px;width:2px;height:6.500px;background:#3e3e3e"></div><div class="a" style="left:866px;top:512px;width:2px;height:6.500px;background:#3e3e3e"></div><div class="a" style="left:888px;top:512px;width:2px;height:6.500px;background:#3e3e3e"></div><div class="a" style="left:911px;top:505px;width:2px;height:13px;background:#484848"></div><div class="a" style="left:933px;top:512px;width:2px;height:6.500px;background:#3e3e3e"></div><div class="a" style="left:955px;top:512px;width:2px;height:6.500px;background:#3e3e3e"></div><div class="a" style="left:978px;top:512px;width:2px;height:6.500px;background:#3e3e3e"></div><div class="a" style="left:1000px;top:512px;width:2px;height:6.500px;background:#3e3e3e"></div><div class="a" style="left:1022px;top:505px;width:2px;height:13px;background:#484848"></div><div class="a" style="left:1045px;top:512px;width:2px;height:6.500px;background:#3e3e3e"></div><div class="a" style="left:1067px;top:512px;width:2px;height:6.500px;background:#3e3e3e"></div><div class="a" style="left:1089px;top:512px;width:2px;height:6.500px;background:#3e3e3e"></div><div class="a" style="left:1112px;top:512px;width:2px;height:6.500px;background:#3e3e3e"></div><div class="a" style="left:1134px;top:505px;width:2px;height:13px;background:#484848"></div>
<div class="a" style="left:20px;top:520px;width:1126px;height:14px;border-radius:7px;background:#2f2f2f"></div>
<div class="a" style="left:20px;top:520px;width:14px;height:14px;border-radius:7px;border:2.800px solid #a2a2a2;background:#1e1e1e"></div>
<div class="a" style="left:1132px;top:520px;width:14px;height:14px;border-radius:7px;border:2.800px solid #a2a2a2;background:#1e1e1e"></div>
<svg style="left:625.7px;top:500px" width="17" height="18" viewBox="0 0 17 18"><path d="M0.500 0.500h16v11.500l-3.500 5.500h-9l-3.500-5.500z" fill="#4aa3ec" stroke="#0a0a0a" stroke-width="1"/></svg>
<svg style="left:330px;top:552.5px" width="14" height="14" viewBox="0 0 14 14"><path d="M0 0h14v8.500l-5.500 5h-3l-5.500-5z" fill="#c2c2c2"/></svg>
<svg style="left:382.5px;top:550px" width="7" height="18" viewBox="0 0 7 18"><path d="M5.500 0.500c-1.200 0-1.500.8-1.500 2v4.500L1.500 9 4 11v4.500c0 1.200.3 2 1.500 2" fill="none" stroke="#c2c2c2" stroke-width="2.500"/></svg>
<svg style="left:426px;top:550px" width="7" height="18" viewBox="0 0 7 18"><path d="M1 0.500c1.200 0 1.500.8 1.500 2v4.500L5 9l-2.500 2v4.500c0 1.200-.3 2-1.500 2" fill="none" stroke="#c2c2c2" stroke-width="2.500"/></svg>
<svg style="left:479.5px;top:550px" width="23" height="18" viewBox="0 0 23 18"><path d="M5.500 0.500c-1.200 0-1.500.8-1.500 2v4.500L1.500 9 4 11v4.500c0 1.200.3 2 1.500 2" fill="none" stroke="#c2c2c2" stroke-width="2.500"/><path d="M7 9l7.500-6v3.800h7.500v4.400h-7.500v3.800z" fill="#c2c2c2"/></svg>
<svg style="left:527px;top:552px" width="19" height="14" viewBox="0 0 19 14"><path d="M0 7l12-7v14z" fill="#c2c2c2"/><path d="M14 0h4v14h-4z" fill="#c2c2c2"/></svg>
<svg style="left:574px;top:551px" width="18" height="16" viewBox="0 0 18 16"><path d="M1 0l17 8-17 8z" fill="#c2c2c2"/></svg>
<svg style="left:622px;top:552px" width="19" height="14" viewBox="0 0 19 14"><path d="M0 0h4v14H0z" fill="#c2c2c2"/><path d="M7 0l12 7-12 7z" fill="#c2c2c2"/></svg>
<svg style="left:664.5px;top:550px" width="23" height="18" viewBox="0 0 23 18"><g transform="translate(16.500 0)"><path d="M1 0.500c1.200 0 1.500.8 1.500 2v4.500L5 9l-2.500 2v4.500c0 1.200-.3 2-1.500 2" fill="none" stroke="#c2c2c2" stroke-width="2.500"/></g><path d="M16 9l-7.500-6v3.800H1v4.400h7.500v3.800z" fill="#c2c2c2"/></svg>
<svg style="left:720px;top:549.5px" width="28" height="18" viewBox="0 0 28 18"><path d="M0 7h28v10.500H0z" fill="#c2c2c2"/><path d="M11.500 12.500h5v5h-5z" fill="#1e1e1e"/><path d="M7 0h14v9.500H7z" fill="#c2c2c2"/><path d="M9 1.800h10v6H9z" fill="#1e1e1e"/><path d="M14 2.800l3.600 4.400h-7.200z" fill="#c2c2c2"/></svg>
<svg style="left:767px;top:549.5px" width="28" height="18" viewBox="0 0 28 18"><path d="M0 7h28v10.500H0z" fill="#c2c2c2"/><path d="M11.500 12.500h5v5h-5z" fill="#1e1e1e"/><path d="M7 0h14v9.500H7z" fill="#c2c2c2"/><path d="M9 1.800h10v6H9z" fill="#1e1e1e"/><path d="M14 2.800l3.600 4.400h-7.200z" fill="#c2c2c2"/><path d="M2.500 9.500l3.800 2.800-3.800 2.800zM25.500 9.500l-3.800 2.800 3.800 2.800z" fill="#1e1e1e"/></svg>
<svg style="left:817.5px;top:550.5px" width="21" height="17" viewBox="0 0 21 17"><path d="M0 4.500h5.500l1.500-4h7l1.500 4H21v12.500H0z" fill="#c2c2c2"/><circle cx="10.500" cy="10" r="4.300" fill="#1e1e1e"/><circle cx="10.500" cy="10" r="2.500" fill="#c2c2c2"/></svg>
<svg style="left:860.5px;top:549px" width="28" height="21" viewBox="0 0 28 21"><path d="M0 0h16.500v13H0z" fill="#c2c2c2"/><path d="M1.300 1v12M15.200 1v12" stroke="#1e1e1e" stroke-width="1" stroke-dasharray="1.500 1.300"/><path d="M10 7.500h18v14H10z" fill="#1e1e1e"/><path d="M11.300 8.500h16v12.500h-16z" fill="#c2c2c2"/><path d="M12.300 9.500v10.500M26.200 9.500v10.500" stroke="#1e1e1e" stroke-width="1" stroke-dasharray="1.500 1.300"/><path d="M16.300 10.300h5.400v8.300h-5.400z" fill="#1e1e1e"/><path d="M19 11.500v6" stroke="#c2c2c2" stroke-width="1.300"/></svg>
<svg style="left:1114px;top:554px" width="16" height="16" viewBox="0 0 16 16"><path d="M6 0h4v6h6v4h-6v6H6v-6H0V6h6z" fill="#d2d2d2"/></svg>
</div>
<!-- ===== PROJECT PANEL ===== -->
<div id="pj" class="a panel" style="left:0;top:681px;width:145px;height:399px;overflow:hidden">
<div class="a" style="left:11px;top:7px;width:81px;height:26px;overflow:hidden"><span class="t tab" style="left:2px;top:3.5px;color:#e2e2e2">项目: 未命名</span></div>
<div class="a" style="left:11px;top:32px;width:81px;height:3px;background:#d6d6d6"></div>
<svg style="left:126px;top:12px" width="15" height="12" viewBox="0 0 15 12"><path d="M1 1l5 5-5 5M8.500 1l5 5-5 5" fill="none" stroke="#c8c8c8" stroke-width="2"/></svg>
<svg style="left:13.5px;top:51.5px" width="23" height="17" viewBox="0 0 23 17"><path d="M0 2.500h8l2 2.500h13v12H0z" fill="#3c3c3c"/><path d="M0 0h7v1.500H0z" fill="#3c3c3c"/><path d="M8 8l-3.500 3.500h2.500v2.500h7v-1.500h-5V11.500h2.500z" fill="#222"/></svg>
<span class="t" style="left:52px;top:52.5px;font-size:15px;font-weight:700;color:#b0b0b0;letter-spacing:-1px">...proj</span>
<div class="a" style="left:15px;top:81px;width:105px;height:26px;background:#101010;border:1px solid #2c2c2c;border-radius:3px"></div>
<svg style="left:21.5px;top:87.5px" width="17" height="16" viewBox="0 0 17 16"><circle cx="10.500" cy="6" r="4.800" fill="none" stroke="#c4c4c4" stroke-width="1.800"/><path d="M7 9.500l-5.500 5.500" stroke="#c4c4c4" stroke-width="2.200" stroke-linecap="round"/></svg>
<div class="a" style="left:14px;top:124px;width:114px;height:233px;background:#151515;border:1px solid #2a2a2a"></div>
<div class="a" style="left:15px;top:125px;width:112px;height:25px;background:#222;border-bottom:1px solid #2e2e2e"></div>
<div class="a" style="left:48px;top:125px;width:1px;height:25px;background:#2e2e2e"></div>
<span class="t" style="left:55.500px;top:130px;font-size:16px;font-weight:700;color:#9a9a9a">名称</span>
<div class="a" style="left:15px;top:150px;width:112px;height:32px;background:#454545"></div>
<div class="a" style="left:23px;top:156px;width:18px;height:18px;background:#b39ddf;border:1px solid #2a2a2a"></div>
<svg style="left:91px;top:158.5px" width="16" height="17" viewBox="0 0 16 17"><rect width="16" height="17" rx="1" fill="#b39ddf"/><path d="M2 0v17M14 0v17" stroke="#7d6bb0" stroke-width="1.200" stroke-dasharray="1.500 1.500"/><path d="M4.500 8.500h7" stroke="#6a5aa0" stroke-width="1.500"/></svg>
<div class="a" style="left:120px;top:156px;width:7px;height:20px;overflow:hidden"><span class="t" style="left:1px;top:3px;font-size:14.500px;font-weight:700;color:#c8c8c8">shu.mov</span></div>
<div class="a" style="left:23px;top:187.8px;width:18px;height:18px;background:#59b862;border:1px solid #2a2a2a"></div>
<svg style="left:89px;top:189px" width="20" height="19" viewBox="0 0 20 19"><path d="M0 6h20M0 10h20" stroke="#4c98dc" stroke-width="2.200"/><path d="M2 14.500h16" stroke="#5cb85c" stroke-width="2.200"/><path d="M9.500 0v19" stroke="#d0d0d0" stroke-width="1.600"/><path d="M7 0h5v3H7z" fill="#d0d0d0"/></svg>
<div class="a" style="left:120px;top:189px;width:7px;height:20px;overflow:hidden"><span class="t" style="left:1px;top:1px;font-size:15.500px;font-weight:700;color:#c8c8c8">老井的记忆</span></div>
<div class="a" style="left:15px;top:214px;width:112px;height:1px;background:#2a2a2a"></div>
<div class="a" style="left:17px;top:342.5px;width:33px;height:12px;border-radius:6px;background:#343434"></div>
<svg style="left:18px;top:385px" width="13" height="16" viewBox="0 0 13 16"><path d="M3 8V5a3.500 3.500 0 0 1 6.500-1.500" fill="none" stroke="#b0b0b0" stroke-width="1.700"/><rect x="0" y="7" width="12.500" height="9" fill="#58b85c"/><rect x="5" y="9.500" width="2.500" height="4" fill="#1b3d1c"/></svg>
<svg style="left:52px;top:385.5px" width="25" height="14" viewBox="0 0 25 14"><rect x="0" y="0" width="7" height="6" fill="#4a9eea"/><rect x="2.300" y="1.800" width="2.400" height="2.400" fill="#16324e"/><rect x="0" y="8.500" width="7" height="6" fill="#4a9eea"/><rect x="2.300" y="10.300" width="2.400" height="2.400" fill="#16324e"/><path d="M10 1.300h14.500M10 4.700h14.500M10 9.800h14.500M10 13.200h14.500" stroke="#4a9eea" stroke-width="1.700"/></svg>
<svg style="left:97px;top:386px" width="15" height="13" viewBox="0 0 15 13"><rect width="15" height="9" fill="#cfcfcf"/><rect y="11.500" width="15" height="2" fill="#cfcfcf"/></svg>
<svg style="left:134px;top:386px" width="12" height="13" viewBox="0 0 12 13"><path d="M10.500 3.500A5.300 5.300 0 1 0 8 12.500" fill="none" stroke="#bdbdbd" stroke-width="3"/></svg>
</div>
<!-- ===== TOOLS ===== -->
<div id="tools" class="a panel" style="left:150px;top:681px;width:72px;height:399px;overflow:hidden">
<div class="a" style="left:14.5px;top:23px;width:36px;height:32px;background:#131313;border:1px solid #2a2a2a;border-radius:3px"></div>
<svg style="left:25.5px;top:28.5px" width="18" height="23" viewBox="0 0 18 23"><path d="M0 0l17.500 13.500-10.500 1.500L0 23z" fill="#4a9eea"/></svg>
<svg style="left:20px;top:67px" width="25" height="15" viewBox="0 0 25 15"><path d="M1 1h11v13H1z" fill="none" stroke="#c2c2c2" stroke-width="1.800" stroke-dasharray="3 2"/><path d="M9 5h8V1l8 6.500-8 6.500v-4H9z" fill="#c2c2c2"/></svg>
<svg style="left:44.5px;top:85.5px" width="5" height="5" viewBox="0 0 5 5"><path d="M5 0v5H0z" fill="#9a9a9a"/></svg>
<svg style="left:19px;top:102px" width="27" height="19" viewBox="0 0 27 19"><path d="M0 9.500l9-6.500v4h3.500v5H9v4zM27 9.500l-9-6.500v4h-3.500v5H18v4z" fill="#c2c2c2"/><path d="M13.500 0v19" stroke="#c2c2c2" stroke-width="2.500"/></svg>
<svg style="left:44.5px;top:122px" width="5" height="5" viewBox="0 0 5 5"><path d="M5 0v5H0z" fill="#9a9a9a"/></svg>
<svg style="left:21.5px;top:137.5px" width="22" height="21" viewBox="0 0 22 21"><g transform="rotate(38 11 10.500)"><rect x="0" y="4.500" width="22" height="12" rx="1.500" fill="#c2c2c2"/><path d="M5 10.500h3M9.500 10.500h3M14 10.500h3" stroke="#1e1e1e" stroke-width="1.600"/></g></svg>
<svg style="left:18.5px;top:174px" width="29" height="19" viewBox="0 0 29 19"><path d="M1.500 0v19M27.500 0v19" stroke="#c2c2c2" stroke-width="3"/><path d="M5 9.500l6-5v3.500h7V4.500l6 5-6 5V11h-7v3.500z" fill="#c2c2c2"/></svg>
<svg style="left:44.5px;top:194px" width="5" height="5" viewBox="0 0 5 5"><path d="M5 0v5H0z" fill="#9a9a9a"/></svg>
<svg style="left:21px;top:208px" width="24" height="23" viewBox="0 0 24 23"><path d="M14 1l9 8-3 3.500-9-8z" fill="#c2c2c2"/><path d="M10 6l8.500 7.500c-1 4-4 6.500-8 7.500L0 23l1.500-10C2.500 9.500 5.500 7 10 6z" fill="#c2c2c2"/><path d="M0.500 22.500l8-8" stroke="#1e1e1e" stroke-width="1.500"/><circle cx="9" cy="14" r="1.800" fill="#1e1e1e"/></svg>
<svg style="left:44.5px;top:231px" width="5" height="5" viewBox="0 0 5 5"><path d="M5 0v5H0z" fill="#9a9a9a"/></svg>
<svg style="left:21px;top:245px" width="24" height="23" viewBox="0 0 24 23"><circle cx="9" cy="9" r="7.200" fill="none" stroke="#c2c2c2" stroke-width="2.400"/><path d="M14.500 14.500l8 7" stroke="#c2c2c2" stroke-width="3.200" stroke-linecap="round"/></svg>
<svg style="left:44.5px;top:267px" width="5" height="5" viewBox="0 0 5 5"><path d="M5 0v5H0z" fill="#9a9a9a"/></svg>
<span class="t" style="left:23.5px;top:278px;font-size:28px;font-weight:700;color:#c2c2c2;font-family:'Liberation Serif',serif">T</span>
<svg style="left:44.5px;top:303px" width="5" height="5" viewBox="0 0 5 5"><path d="M5 0v5H0z" fill="#9a9a9a"/></svg>
</div>
<!-- ===== TIMELINE ===== -->
<div id="tl" class="a panel" style="left:226px;top:681px;width:1590px;height:399px;border:2px solid #2f78c4;border-right-width:3px;border-bottom:none;overflow:hidden">
<svg style="left:13px;top:14px" width="8" height="8" viewBox="0 0 8 8"><path d="M0.500 0.500l7 7M7.500 0.500l-7 7" stroke="#9a9a9a" stroke-width="1.300"/></svg>
<span class="t tab" style="left:35px;top:8.5px;color:#d8d8d8">老井的记忆1分钟版</span>
<svg style="left:185px;top:12px" width="12" height="11" viewBox="0 0 12 11"><path d="M0 1h12M0 5.500h12M0 10h12" stroke="#c8c8c8" stroke-width="1.500"/></svg>
<span class="t" style="left:25px;top:39.5px;font-size:22px;font-weight:700;color:#4a9eea;-webkit-text-stroke:0.5px #4a9eea;letter-spacing:0.4px">00:00:05:13</span>
<svg style="left:28.5px;top:73.5px" width="20" height="17" viewBox="0 0 20 17"><path d="M2.500 4.500h15.500v3H2.500zM0 9h17.500v3H0zM4 13.500h16v3H4z" fill="#c2c2c2"/><path d="M9 0h2.200v17H9z" fill="#c2c2c2"/><path d="M7 0h6.200v2H7z" fill="#c2c2c2"/></svg>
<svg style="left:74.5px;top:74px" width="18" height="17" viewBox="0 0 18 17"><path d="M2.800 17V8.800a6.200 6.200 0 0 1 12.400 0V17" fill="none" stroke="#4a9eea" stroke-width="5.500"/><path d="M0 12.500h5.600V17H0zM12.400 12.500H18V17h-5.600z" fill="#2b65a0"/></svg>
<svg style="left:118px;top:74px" width="21" height="19" viewBox="0 0 21 19"><path d="M0 0h9v7H0zM11 0h10v7H11z" fill="#c2c2c2"/><path d="M1 9.500h7v6H1z" fill="none" stroke="#c2c2c2" stroke-width="2"/><path d="M9.500 1l11 9.500-6 .8-4.500 7z" fill="#c2c2c2" stroke="#1e1e1e" stroke-width="1.200"/></svg>
<svg style="left:168.5px;top:76.5px" width="13" height="12.5" viewBox="0 0 13 12.5"><path d="M0 0h13v6.500c0 2-3 4.500-6.500 6C3 11 0 8.500 0 6.500z" fill="#c2c2c2"/></svg>
<svg style="left:210px;top:73px" width="21" height="21" viewBox="0 0 21 21"><path d="M2 .8a5.200 5.200 0 0 0 1.500 8.700c.9.300 1.900.3 2.800.1l9.500 10.200a2 2 0 0 0 3-2.800L9.200 7.200c.5-1.700 0-3.700-1.400-5.100A5.200 5.200 0 0 0 4.500.4l2.600 3-.7 2.600-2.600.7z" fill="#c2c2c2"/></svg>
<div class="a" style="left:1px;top:134px;width:315px;height:102.5px;background:#242424;"></div>
<div class="a" style="left:1px;top:241px;width:315px;height:134.5px;background:#242424;"></div>
<div class="a" style="left:202px;top:134px;width:114px;height:102.5px;background:#1e1e1e;"></div>
<div class="a" style="left:272px;top:241px;width:44px;height:101px;background:#1e1e1e;"></div>
<div class="a" style="left:316px;top:97px;width:1239px;height:286px;background:#1b1b1b;"></div>
<div class="a" style="left:1px;top:134px;width:1554px;height:1px;background:#2a2a2a;"></div>
<div class="a" style="left:1px;top:168px;width:1554px;height:1px;background:#2a2a2a;"></div>
<div class="a" style="left:1px;top:202px;width:1554px;height:1px;background:#2a2a2a;"></div>
<div class="a" style="left:1px;top:236px;width:1554px;height:1px;background:#2a2a2a;"></div>
<div class="a" style="left:1px;top:241px;width:1554px;height:1px;background:#2a2a2a;"></div>
<div class="a" style="left:1px;top:275px;width:1554px;height:1px;background:#2a2a2a;"></div>
<div class="a" style="left:1px;top:308px;width:1554px;height:1px;background:#2a2a2a;"></div>
<div class="a" style="left:1px;top:341px;width:1554px;height:1px;background:#2a2a2a;"></div>
<div class="a" style="left:1px;top:375px;width:1554px;height:1px;background:#2a2a2a;"></div>
<div class="a" style="left:1px;top:237px;width:1554px;height:4px;background:#1b1b1b;"></div>
<div class="a" style="left:315.5px;top:77px;width:1px;height:306px;background:#2a2a2a;"></div>
<svg style="left:66px;top:142.45px" width="13" height="15" viewBox="0 0 13 15"><path d="M3.500 7.500V4.500a3.200 3.200 0 0 1 6.400 0" fill="none" stroke="#c2c2c2" stroke-width="1.800"/><rect x="1" y="7" width="11" height="8" rx="1" fill="#c2c2c2"/><rect x="5.500" y="9.500" width="2" height="3.500" fill="#242424"/></svg>
<span class="t" style="left:86px;top:146.25px;width:43px;text-align:center;font-size:13px;color:#9a9a9a;letter-spacing:-0.6px">V3</span>
<svg style="left:139.5px;top:143.95px" width="17" height="14" viewBox="0 0 17 14"><path d="M1 1h11v4.500H1zM1 8.500h11V13H1z" fill="none" stroke="#c2c2c2" stroke-width="1.900"/><path d="M12 3h4.500v8H12z" fill="#c2c2c2"/><path d="M12 6.200h2" stroke="#242424" stroke-width="1.500"/></svg>
<svg style="left:174px;top:145.25px" width="19" height="13" viewBox="0 0 19 13"><path d="M0 6.500C3 1.800 6.500 0 9.500 0s6.500 1.800 9.500 6.500C16 11.200 12.500 13 9.500 13S3 11.200 0 6.500z" fill="#c2c2c2"/><circle cx="9.500" cy="6.500" r="3.600" fill="#242424"/><circle cx="9.500" cy="6.500" r="1.700" fill="#c2c2c2"/><circle cx="10.800" cy="5.200" r="1" fill="#242424"/></svg>
<svg style="left:66px;top:176.45px" width="13" height="15" viewBox="0 0 13 15"><path d="M3.500 7.500V4.500a3.200 3.200 0 0 1 6.400 0" fill="none" stroke="#c2c2c2" stroke-width="1.800"/><rect x="1" y="7" width="11" height="8" rx="1" fill="#c2c2c2"/><rect x="5.500" y="9.500" width="2" height="3.500" fill="#242424"/></svg>
<span class="t" style="left:86px;top:180.25px;width:43px;text-align:center;font-size:13px;color:#9a9a9a;letter-spacing:-0.6px">V2</span>
<svg style="left:139.5px;top:177.95px" width="17" height="14" viewBox="0 0 17 14"><path d="M1 1h11v4.500H1zM1 8.500h11V13H1z" fill="none" stroke="#c2c2c2" stroke-width="1.900"/><path d="M12 3h4.500v8H12z" fill="#c2c2c2"/><path d="M12 6.200h2" stroke="#242424" stroke-width="1.500"/></svg>
<svg style="left:174px;top:179.25px" width="19" height="13" viewBox="0 0 19 13"><path d="M0 6.500C3 1.800 6.500 0 9.500 0s6.500 1.800 9.500 6.500C16 11.200 12.500 13 9.500 13S3 11.200 0 6.500z" fill="#c2c2c2"/><circle cx="9.500" cy="6.500" r="3.600" fill="#242424"/><circle cx="9.500" cy="6.500" r="1.700" fill="#c2c2c2"/><circle cx="10.800" cy="5.200" r="1" fill="#242424"/></svg>
<svg style="left:66px;top:210.45px" width="13" height="15" viewBox="0 0 13 15"><path d="M3.500 7.500V4.500a3.200 3.200 0 0 1 6.400 0" fill="none" stroke="#c2c2c2" stroke-width="1.800"/><rect x="1" y="7" width="11" height="8" rx="1" fill="#c2c2c2"/><rect x="5.500" y="9.500" width="2" height="3.500" fill="#242424"/></svg>
<div class="a" style="left:86px;top:203.0px;width:43px;height:32.5px;background:#0f5f92;"></div>
<span class="t" style="left:86px;top:214.25px;width:43px;text-align:center;font-size:13px;color:#a9cbe6;letter-spacing:-0.6px">V1</span>
<svg style="left:139.5px;top:211.95px" width="17" height="14" viewBox="0 0 17 14"><path d="M1 1h11v4.500H1zM1 8.500h11V13H1z" fill="none" stroke="#c2c2c2" stroke-width="1.900"/><path d="M12 3h4.500v8H12z" fill="#c2c2c2"/><path d="M12 6.200h2" stroke="#242424" stroke-width="1.500"/></svg>
<svg style="left:174px;top:213.25px" width="19" height="13" viewBox="0 0 19 13"><path d="M0 6.500C3 1.800 6.500 0 9.500 0s6.500 1.800 9.500 6.500C16 11.200 12.500 13 9.500 13S3 11.200 0 6.500z" fill="#c2c2c2"/><circle cx="9.500" cy="6.500" r="3.600" fill="#242424"/><circle cx="9.500" cy="6.500" r="1.700" fill="#c2c2c2"/><circle cx="10.800" cy="5.200" r="1" fill="#242424"/></svg>
<svg style="left:66px;top:249.2px" width="13" height="15" viewBox="0 0 13 15"><path d="M3.500 7.500V4.500a3.200 3.200 0 0 1 6.400 0" fill="none" stroke="#c2c2c2" stroke-width="1.800"/><rect x="1" y="7" width="11" height="8" rx="1" fill="#c2c2c2"/><rect x="5.500" y="9.500" width="2" height="3.500" fill="#242424"/></svg>
<div class="a" style="left:86px;top:242.0px;width:43px;height:32.0px;background:#0f5f92;"></div>
<span class="t" style="left:86px;top:253.0px;width:43px;text-align:center;font-size:13px;color:#a9cbe6;letter-spacing:-0.6px">A1</span>
<svg style="left:139.5px;top:250.7px" width="17" height="14" viewBox="0 0 17 14"><path d="M1 1h11v4.500H1zM1 8.500h11V13H1z" fill="none" stroke="#c2c2c2" stroke-width="1.900"/><path d="M12 3h4.500v8H12z" fill="#c2c2c2"/><path d="M12 6.200h2" stroke="#242424" stroke-width="1.500"/></svg>
<span class="t" style="left:177.5px;top:252.3px;font-size:13px;font-weight:700;color:#c2c2c2">M</span>
<span class="t" style="left:215px;top:252.3px;font-size:13px;font-weight:700;color:#c2c2c2">S</span>
<svg style="left:249px;top:247.7px" width="14" height="19" viewBox="0 0 14 19"><rect x="3.500" y="0" width="7" height="12" rx="3.500" fill="#c2c2c2"/><path d="M1 8.500a6 6 0 0 0 12 0" fill="none" stroke="#c2c2c2" stroke-width="1.600"/><path d="M7 14.500v3M3 18.500h8" stroke="#c2c2c2" stroke-width="1.600"/></svg>
<svg style="left:66px;top:282.7px" width="13" height="15" viewBox="0 0 13 15"><path d="M3.500 7.500V4.500a3.200 3.200 0 0 1 6.400 0" fill="none" stroke="#c2c2c2" stroke-width="1.800"/><rect x="1" y="7" width="11" height="8" rx="1" fill="#c2c2c2"/><rect x="5.500" y="9.500" width="2" height="3.500" fill="#242424"/></svg>
<div class="a" style="left:86px;top:275.5px;width:43px;height:32px;background:#0f5f92;"></div>
<span class="t" style="left:86px;top:286.5px;width:43px;text-align:center;font-size:13px;color:#a9cbe6;letter-spacing:-0.6px">A2</span>
<svg style="left:139.5px;top:284.2px" width="17" height="14" viewBox="0 0 17 14"><path d="M1 1h11v4.500H1zM1 8.500h11V13H1z" fill="none" stroke="#c2c2c2" stroke-width="1.900"/><path d="M12 3h4.500v8H12z" fill="#c2c2c2"/><path d="M12 6.200h2" stroke="#242424" stroke-width="1.500"/></svg>
<span class="t" style="left:177.5px;top:285.8px;font-size:13px;font-weight:700;color:#c2c2c2">M</span>
<span class="t" style="left:215px;top:285.8px;font-size:13px;font-weight:700;color:#c2c2c2">S</span>
<svg style="left:249px;top:281.2px" width="14" height="19" viewBox="0 0 14 19"><rect x="3.500" y="0" width="7" height="12" rx="3.500" fill="#c2c2c2"/><path d="M1 8.500a6 6 0 0 0 12 0" fill="none" stroke="#c2c2c2" stroke-width="1.600"/><path d="M7 14.500v3M3 18.500h8" stroke="#c2c2c2" stroke-width="1.600"/></svg>
<svg style="left:66px;top:316.2px" width="13" height="15" viewBox="0 0 13 15"><path d="M3.500 7.500V4.500a3.200 3.200 0 0 1 6.400 0" fill="none" stroke="#c2c2c2" stroke-width="1.800"/><rect x="1" y="7" width="11" height="8" rx="1" fill="#c2c2c2"/><rect x="5.500" y="9.500" width="2" height="3.500" fill="#242424"/></svg>
<div class="a" style="left:86px;top:309.0px;width:43px;height:32.0px;background:#0f5f92;"></div>
<span class="t" style="left:86px;top:320.0px;width:43px;text-align:center;font-size:13px;color:#a9cbe6;letter-spacing:-0.6px">A3</span>
<svg style="left:139.5px;top:317.7px" width="17" height="14" viewBox="0 0 17 14"><path d="M1 1h11v4.500H1zM1 8.500h11V13H1z" fill="none" stroke="#c2c2c2" stroke-width="1.900"/><path d="M12 3h4.500v8H12z" fill="#c2c2c2"/><path d="M12 6.200h2" stroke="#242424" stroke-width="1.500"/></svg>
<span class="t" style="left:177.5px;top:319.3px;font-size:13px;font-weight:700;color:#c2c2c2">M</span>
<span class="t" style="left:215px;top:319.3px;font-size:13px;font-weight:700;color:#c2c2c2">S</span>
<svg style="left:249px;top:314.7px" width="14" height="19" viewBox="0 0 14 19"><rect x="3.500" y="0" width="7" height="12" rx="3.500" fill="#c2c2c2"/><path d="M1 8.500a6 6 0 0 0 12 0" fill="none" stroke="#c2c2c2" stroke-width="1.600"/><path d="M7 14.500v3M3 18.500h8" stroke="#c2c2c2" stroke-width="1.600"/></svg>
<svg style="left:66px;top:349.7px" width="13" height="15" viewBox="0 0 13 15"><path d="M3.500 7.500V4.500a3.200 3.200 0 0 1 6.400 0" fill="none" stroke="#c2c2c2" stroke-width="1.800"/><rect x="1" y="7" width="11" height="8" rx="1" fill="#c2c2c2"/><rect x="5.500" y="9.500" width="2" height="3.500" fill="#242424"/></svg>
<div class="a" style="left:16px;top:202.5px;width:44px;height:33px;background:#0f5f92;"></div>
<span class="t" style="left:16px;top:214.2px;width:44px;text-align:center;font-size:13px;color:#a9cbe6;letter-spacing:-0.6px">V1</span>
<span class="t" style="left:89.5px;top:350.5px;font-size:15.500px;font-weight:500;color:#a8a8a8">主声道</span>
<span class="t val" style="left:194px;top:353px;font-weight:400;letter-spacing:-0.3px">0.0</span>
<svg style="left:289px;top:346px" width="17" height="13" viewBox="0 0 17 13"><path d="M0 0l8.500 5L17 0v13L8.500 8 0 13z" fill="#c2c2c2"/></svg>
<span class="t" style="left:315.5px;top:60.5px;font-size:14.500px;font-weight:700;color:#a4a4a4;letter-spacing:-0.3px">:00:00</span>
<span class="t" style="left:389.9px;top:60.5px;font-size:14.500px;font-weight:700;color:#a4a4a4;letter-spacing:-0.3px">00:00:01:00</span>
<span class="t" style="left:499.7px;top:60.5px;font-size:14.500px;font-weight:700;color:#a4a4a4;letter-spacing:-0.3px">00:00:02:00</span>
<span class="t" style="left:609.5px;top:60.5px;font-size:14.500px;font-weight:700;color:#a4a4a4;letter-spacing:-0.3px">00:00:03:00</span>
<span class="t" style="left:719.4px;top:60.5px;font-size:14.500px;font-weight:700;color:#a4a4a4;letter-spacing:-0.3px">00:00:04:00</span>
<span class="t" style="left:829.2px;top:60.5px;font-size:14.500px;font-weight:700;color:#a4a4a4;letter-spacing:-0.3px">00:00:05:00</span>
<span class="t" style="left:939.1px;top:60.5px;font-size:14.500px;font-weight:700;color:#a4a4a4;letter-spacing:-0.3px">00:00:06:00</span>
<span class="t" style="left:1048.9px;top:60.5px;font-size:14.500px;font-weight:700;color:#a4a4a4;letter-spacing:-0.3px">00:00:07:00</span>
<span class="t" style="left:1158.8px;top:60.5px;font-size:14.500px;font-weight:700;color:#a4a4a4;letter-spacing:-0.3px">00:00:08:00</span>
<span class="t" style="left:1268.7px;top:60.5px;font-size:14.500px;font-weight:700;color:#a4a4a4;letter-spacing:-0.3px">00:00:09:00</span>
<span class="t" style="left:1378.5px;top:60.5px;font-size:14.500px;font-weight:700;color:#a4a4a4;letter-spacing:-0.3px">00:00:10:00</span>
<span class="t" style="left:1488.3px;top:60.5px;font-size:14.500px;font-weight:700;color:#a4a4a4;letter-spacing:-0.3px">00:00:11:0</span>
<div class="a" style="left:316px;top:79px;width:1px;height:14px;background:#555"></div><div class="a" style="left:338px;top:87px;width:1px;height:6px;background:#4a4a4a"></div><div class="a" style="left:360px;top:87px;width:1px;height:6px;background:#4a4a4a"></div><div class="a" style="left:382px;top:87px;width:1px;height:6px;background:#4a4a4a"></div><div class="a" style="left:404px;top:87px;width:1px;height:6px;background:#4a4a4a"></div><div class="a" style="left:426px;top:79px;width:1px;height:14px;background:#555"></div><div class="a" style="left:448px;top:87px;width:1px;height:6px;background:#4a4a4a"></div><div class="a" style="left:470px;top:87px;width:1px;height:6px;background:#4a4a4a"></div><div class="a" style="left:492px;top:87px;width:1px;height:6px;background:#4a4a4a"></div><div class="a" style="left:514px;top:87px;width:1px;height:6px;background:#4a4a4a"></div><div class="a" style="left:536px;top:79px;width:1px;height:14px;background:#555"></div><div class="a" style="left:558px;top:87px;width:1px;height:6px;background:#4a4a4a"></div><div class="a" style="left:580px;top:87px;width:1px;height:6px;background:#4a4a4a"></div><div class="a" style="left:602px;top:87px;width:1px;height:6px;background:#4a4a4a"></div><div class="a" style="left:624px;top:87px;width:1px;height:6px;background:#4a4a4a"></div><div class="a" style="left:646px;top:79px;width:1px;height:14px;background:#555"></div><div class="a" style="left:668px;top:87px;width:1px;height:6px;background:#4a4a4a"></div><div class="a" style="left:689px;top:87px;width:1px;height:6px;background:#4a4a4a"></div><div class="a" style="left:711px;top:87px;width:1px;height:6px;background:#4a4a4a"></div><div class="a" style="left:733px;top:87px;width:1px;height:6px;background:#4a4a4a"></div><div class="a" style="left:755px;top:79px;width:1px;height:14px;background:#555"></div><div class="a" style="left:777px;top:87px;width:1px;height:6px;background:#4a4a4a"></div><div class="a" style="left:799px;top:87px;width:1px;height:6px;background:#4a4a4a"></div><div class="a" style="left:821px;top:87px;width:1px;height:6px;background:#4a4a4a"></div><div class="a" style="left:843px;top:87px;width:1px;height:6px;background:#4a4a4a"></div><div class="a" style="left:865px;top:79px;width:1px;height:14px;background:#555"></div><div class="a" style="left:887px;top:87px;width:1px;height:6px;background:#4a4a4a"></div><div class="a" style="left:909px;top:87px;width:1px;height:6px;background:#4a4a4a"></div><div class="a" style="left:931px;top:87px;width:1px;height:6px;background:#4a4a4a"></div><div class="a" style="left:953px;top:87px;width:1px;height:6px;background:#4a4a4a"></div><div class="a" style="left:975px;top:79px;width:1px;height:14px;background:#555"></div><div class="a" style="left:997px;top:87px;width:1px;height:6px;background:#4a4a4a"></div><div class="a" style="left:1019px;top:87px;width:1px;height:6px;background:#4a4a4a"></div><div class="a" style="left:1041px;top:87px;width:1px;height:6px;background:#4a4a4a"></div><div class="a" style="left:1063px;top:87px;width:1px;height:6px;background:#4a4a4a"></div><div class="a" style="left:1085px;top:79px;width:1px;height:14px;background:#555"></div><div class="a" style="left:1107px;top:87px;width:1px;height:6px;background:#4a4a4a"></div><div class="a" style="left:1129px;top:87px;width:1px;height:6px;background:#4a4a4a"></div><div class="a" style="left:1151px;top:87px;width:1px;height:6px;background:#4a4a4a"></div><div class="a" style="left:1173px;top:87px;width:1px;height:6px;background:#4a4a4a"></div><div class="a" style="left:1195px;top:79px;width:1px;height:14px;background:#555"></div><div class="a" style="left:1217px;top:87px;width:1px;height:6px;background:#4a4a4a"></div><div class="a" style="left:1239px;top:87px;width:1px;height:6px;background:#4a4a4a"></div><div class="a" style="left:1261px;top:87px;width:1px;height:6px;background:#4a4a4a"></div><div class="a" style="left:1283px;top:87px;width:1px;height:6px;background:#4a4a4a"></div><div class="a" style="left:1305px;top:79px;width:1px;height:14px;background:#555"></div><div class="a" style="left:1327px;top:87px;width:1px;height:6px;background:#4a4a4a"></div><div class="a" style="left:1349px;top:87px;width:1px;height:6px;background:#4a4a4a"></div><div class="a" style="left:1371px;top:87px;width:1px;height:6px;background:#4a4a4a"></div><div class="a" style="left:1393px;top:87px;width:1px;height:6px;background:#4a4a4a"></div><div class="a" style="left:1414px;top:79px;width:1px;height:14px;background:#555"></div><div class="a" style="left:1436px;top:87px;width:1px;height:6px;background:#4a4a4a"></div><div class="a" style="left:1458px;top:87px;width:1px;height:6px;background:#4a4a4a"></div><div class="a" style="left:1480px;top:87px;width:1px;height:6px;background:#4a4a4a"></div><div class="a" style="left:1502px;top:87px;width:1px;height:6px;background:#4a4a4a"></div><div class="a" style="left:1524px;top:79px;width:1px;height:14px;background:#555"></div><div class="a" style="left:1546px;top:87px;width:1px;height:6px;background:#4a4a4a"></div>
<div class="a" style="left:316px;top:93px;width:1102px;height:3px;background:#e3df4a;"></div>
<div class="a" style="left:314px;top:203px;width:2px;height:33.5px;background:#000;"></div>
<div class="a" style="left:316px;top:235.3px;width:1102px;height:1.2px;background:#000;"></div>
<div class="a" style="left:316px;top:202.8px;width:1101.6px;height:32.5px;background:#cbcbcb;"></div>
<svg style="left:316px;top:202.8px" width="1102" height="8" viewBox="0 0 1102 8"><path d="M0 0h7.500L0 7.500z" fill="#f2f2f2"/><path d="M0 7.500L7.500 0" stroke="#222" stroke-width="1.100"/><path d="M1101.600 0h-7.500l7.500 7.500z" fill="#f2f2f2"/><path d="M1101.600 7.500l-7.500-7.500" stroke="#222" stroke-width="1.100"/></svg>
<div class="a" style="left:330px;top:207.3px;width:13px;height:11.7px;background:#7e7e7e;"></div>
<span class="t" style="left:332px;top:206.5px;font-size:11.500px;font-weight:700;font-style:italic;color:#2a2a2a;letter-spacing:-0.5px">fx</span>
<span class="t" style="left:354px;top:205.5px;font-size:13px;color:#2a2a2a;letter-spacing:-0.35px">shu.mov</span>
<div class="a" style="left:1124.5px;top:37px;width:2px;height:55px;background:#b8b8b8;"></div>
<svg style="left:914px;top:77.5px" width="16" height="16" viewBox="0 0 16 16"><path d="M0.500 0h15v9.500l-5 6h-5l-5-6z" fill="#4a9eea"/></svg>
<div class="a" style="left:921px;top:93px;width:1.5px;height:290px;background:#9aa7b3;"></div>
<div class="a" style="left:921px;top:203px;width:1.5px;height:33px;background:#5a94cc;"></div>
<div class="a" style="left:1556px;top:103px;width:14px;height:128px;background:#2a2a2a;border-radius:7px"></div>
<div class="a" style="left:1556px;top:246px;width:14px;height:132px;background:#2a2a2a;border-radius:7px"></div>
<div class="a" style="left:1556px;top:100.5px;width:14px;height:14px;border-radius:7px;border:2.800px solid #9a9a9a;background:#1e1e1e"></div>
<div class="a" style="left:1556px;top:220px;width:14px;height:14px;border-radius:7px;border:2.800px solid #9a9a9a;background:#1e1e1e"></div>
<div class="a" style="left:1556px;top:243px;width:14px;height:14px;border-radius:7px;border:2.800px solid #9a9a9a;background:#1e1e1e"></div>
<div class="a" style="left:1556px;top:366.5px;width:14px;height:14px;border-radius:7px;border:2.800px solid #9a9a9a;background:#1e1e1e"></div>
<div class="a" style="left:1px;top:383px;width:1585px;height:14px;background:#191919;"></div>
<div class="a" style="left:24px;top:385px;width:136px;height:13px;background:#323232;border-radius:7px"></div>
<div class="a" style="left:160px;top:385px;width:1392px;height:13px;background:#131313;border-radius:7px"></div>
<div class="a" style="left:17.5px;top:384px;width:14px;height:14px;border-radius:7px;border:2.800px solid #9a9a9a;background:#1e1e1e"></div>
<div class="a" style="left:152.5px;top:384px;width:14px;height:14px;border-radius:7px;border:2.800px solid #9a9a9a;background:#1e1e1e"></div>
<svg style="left:1118px;top:229px" width="18" height="24" viewBox="0 0 18 24"><path d="M1.500 1.500v17l4-3.500 3 7 3-1.300-3-6.700h5.500z" fill="#111" stroke="#fff" stroke-width="1.500" stroke-linejoin="round"/></svg>
</div>
<!-- ===== AUDIO METERS ===== -->
<div id="am" class="a panel" style="left:1819px;top:681px;width:101px;height:399px;overflow:hidden">
<div class="a" style="left:17px;top:34px;width:42px;height:338px;background:#111;"></div>
<div class="a" style="left:18px;top:35px;width:40px;height:336px;background:#181818;"></div>
<div class="a" style="left:18px;top:35px;width:40px;height:12px;background:#1c1c1c;"></div>
<div class="a" style="left:37px;top:35px;width:1px;height:12px;background:#0e0e0e;"></div>
<div class="a" style="left:18px;top:47px;width:40px;height:1px;background:#0e0e0e;"></div>
<div class="a" style="left:18px;top:369px;width:40px;height:2px;background:#d8d44a;"></div>
<span class="t" style="left:68.5px;top:43.5px;font-size:13px;font-weight:700;color:#b4b4b4;letter-spacing:-0.7px">0</span>
<div class="a" style="left:59px;top:49.3px;width:6px;height:1.5px;background:#a8a8a8;"></div>
<span class="t" style="left:68.5px;top:76.1px;font-size:13px;font-weight:700;color:#b4b4b4;letter-spacing:-0.7px">-6</span>
<div class="a" style="left:59px;top:82.3px;width:6px;height:1.5px;background:#a8a8a8;"></div>
<span class="t" style="left:68.5px;top:108.0px;font-size:13px;font-weight:700;color:#b4b4b4;letter-spacing:-0.7px">-12</span>
<div class="a" style="left:59px;top:114.3px;width:6px;height:1.5px;background:#a8a8a8;"></div>
<span class="t" style="left:68.5px;top:140.5px;font-size:13px;font-weight:700;color:#b4b4b4;letter-spacing:-0.7px">-18</span>
<div class="a" style="left:59px;top:146.3px;width:6px;height:1.5px;background:#a8a8a8;"></div>
<span class="t" style="left:68.5px;top:172.5px;font-size:13px;font-weight:700;color:#b4b4b4;letter-spacing:-0.7px">-24</span>
<div class="a" style="left:59px;top:178.3px;width:6px;height:1.5px;background:#a8a8a8;"></div>
<span class="t" style="left:68.5px;top:204.5px;font-size:13px;font-weight:700;color:#b4b4b4;letter-spacing:-0.7px">-30</span>
<div class="a" style="left:59px;top:210.3px;width:6px;height:1.5px;background:#a8a8a8;"></div>
<span class="t" style="left:68.5px;top:236.0px;font-size:13px;font-weight:700;color:#b4b4b4;letter-spacing:-0.7px">-36</span>
<div class="a" style="left:59px;top:242.3px;width:6px;height:1.5px;background:#a8a8a8;"></div>
<span class="t" style="left:68.5px;top:268.0px;font-size:13px;font-weight:700;color:#b4b4b4;letter-spacing:-0.7px">-42</span>
<div class="a" style="left:59px;top:274.3px;width:6px;height:1.5px;background:#a8a8a8;"></div>
<span class="t" style="left:68.5px;top:299.5px;font-size:13px;font-weight:700;color:#b4b4b4;letter-spacing:-0.7px">-48</span>
<div class="a" style="left:59px;top:305.3px;width:6px;height:1.5px;background:#a8a8a8;"></div>
<span class="t" style="left:68.5px;top:332.0px;font-size:13px;font-weight:700;color:#b4b4b4;letter-spacing:-0.7px">-54</span>
<div class="a" style="left:59px;top:338.3px;width:6px;height:1.5px;background:#a8a8a8;"></div>
<span class="t" style="left:68.5px;top:360.5px;font-size:13px;font-weight:700;color:#b4b4b4;letter-spacing:-0.7px">dB</span>
<div class="a" style="left:59px;top:54.3px;width:4px;height:1.500px;background:#8c8c8c"></div><div class="a" style="left:59px;top:60.3px;width:4px;height:1.500px;background:#8c8c8c"></div><div class="a" style="left:59px;top:65.3px;width:4px;height:1.500px;background:#8c8c8c"></div><div class="a" style="left:59px;top:70.3px;width:4px;height:1.500px;background:#8c8c8c"></div><div class="a" style="left:59px;top:76.3px;width:4px;height:1.500px;background:#8c8c8c"></div><div class="a" style="left:59px;top:87.3px;width:4px;height:1.500px;background:#8c8c8c"></div><div class="a" style="left:59px;top:92.3px;width:4px;height:1.500px;background:#8c8c8c"></div><div class="a" style="left:59px;top:97.3px;width:4px;height:1.500px;background:#8c8c8c"></div><div class="a" style="left:59px;top:103.3px;width:4px;height:1.500px;background:#8c8c8c"></div><div class="a" style="left:59px;top:108.3px;width:4px;height:1.500px;background:#8c8c8c"></div><div class="a" style="left:59px;top:119.3px;width:4px;height:1.500px;background:#8c8c8c"></div><div class="a" style="left:59px;top:124.3px;width:4px;height:1.500px;background:#8c8c8c"></div><div class="a" style="left:59px;top:129.3px;width:4px;height:1.500px;background:#8c8c8c"></div><div class="a" style="left:59px;top:135.3px;width:4px;height:1.500px;background:#8c8c8c"></div><div class="a" style="left:59px;top:140.3px;width:4px;height:1.500px;background:#8c8c8c"></div><div class="a" style="left:59px;top:151.3px;width:4px;height:1.500px;background:#8c8c8c"></div><div class="a" style="left:59px;top:156.3px;width:4px;height:1.500px;background:#8c8c8c"></div><div class="a" style="left:59px;top:162.3px;width:4px;height:1.500px;background:#8c8c8c"></div><div class="a" style="left:59px;top:167.3px;width:4px;height:1.500px;background:#8c8c8c"></div><div class="a" style="left:59px;top:172.3px;width:4px;height:1.500px;background:#8c8c8c"></div><div class="a" style="left:59px;top:183.3px;width:4px;height:1.500px;background:#8c8c8c"></div><div class="a" style="left:59px;top:188.3px;width:4px;height:1.500px;background:#8c8c8c"></div><div class="a" style="left:59px;top:194.3px;width:4px;height:1.500px;background:#8c8c8c"></div><div class="a" style="left:59px;top:199.3px;width:4px;height:1.500px;background:#8c8c8c"></div><div class="a" style="left:59px;top:204.3px;width:4px;height:1.500px;background:#8c8c8c"></div><div class="a" style="left:59px;top:215.3px;width:4px;height:1.500px;background:#8c8c8c"></div><div class="a" style="left:59px;top:221.3px;width:4px;height:1.500px;background:#8c8c8c"></div><div class="a" style="left:59px;top:226.3px;width:4px;height:1.500px;background:#8c8c8c"></div><div class="a" style="left:59px;top:231.3px;width:4px;height:1.500px;background:#8c8c8c"></div><div class="a" style="left:59px;top:237.3px;width:4px;height:1.500px;background:#8c8c8c"></div><div class="a" style="left:59px;top:247.3px;width:4px;height:1.500px;background:#8c8c8c"></div><div class="a" style="left:59px;top:253.3px;width:4px;height:1.500px;background:#8c8c8c"></div><div class="a" style="left:59px;top:258.3px;width:4px;height:1.500px;background:#8c8c8c"></div><div class="a" style="left:59px;top:263.3px;width:4px;height:1.500px;background:#8c8c8c"></div><div class="a" style="left:59px;top:269.3px;width:4px;height:1.500px;background:#8c8c8c"></div><div class="a" style="left:59px;top:279.3px;width:4px;height:1.500px;background:#8c8c8c"></div><div class="a" style="left:59px;top:285.3px;width:4px;height:1.500px;background:#8c8c8c"></div><div class="a" style="left:59px;top:290.3px;width:4px;height:1.500px;background:#8c8c8c"></div><div class="a" style="left:59px;top:296.3px;width:4px;height:1.500px;background:#8c8c8c"></div><div class="a" style="left:59px;top:301.3px;width:4px;height:1.500px;background:#8c8c8c"></div><div class="a" style="left:59px;top:312.3px;width:4px;height:1.500px;background:#8c8c8c"></div><div class="a" style="left:59px;top:317.3px;width:4px;height:1.500px;background:#8c8c8c"></div><div class="a" style="left:59px;top:322.3px;width:4px;height:1.500px;background:#8c8c8c"></div><div class="a" style="left:59px;top:328.3px;width:4px;height:1.500px;background:#8c8c8c"></div><div class="a" style="left:59px;top:333.3px;width:4px;height:1.500px;background:#8c8c8c"></div><div class="a" style="left:59px;top:344.3px;width:4px;height:1.500px;background:#8c8c8c"></div><div class="a" style="left:59px;top:349.3px;width:4px;height:1.500px;background:#8c8c8c"></div><div class="a" style="left:59px;top:355.3px;width:4px;height:1.500px;background:#8c8c8c"></div><div class="a" style="left:59px;top:360.3px;width:4px;height:1.500px;background:#8c8c8c"></div>
<div class="a" style="left:19px;top:381px;width:16px;height:18px;background:#1a1a1a;border:1px solid #333"></div>
<span class="t" style="left:22.5px;top:384px;font-size:13px;font-weight:700;color:#b0b0b0">S</span>
<div class="a" style="left:40px;top:381px;width:16px;height:18px;background:#1a1a1a;border:1px solid #333"></div>
<span class="t" style="left:43.5px;top:384px;font-size:13px;font-weight:700;color:#b0b0b0">S</span>
</div>
<!-- ===== OVERLAY TITLE ===== -->
<svg style="left:0;top:0" width="600" height="320" viewBox="0 0 600 320"><g font-family="'Liberation Sans','Noto Sans CJK SC',sans-serif" font-weight="400" font-size="112" fill="#ebebeb" stroke="#ebebeb" stroke-width="6.500" stroke-linejoin="round"><text transform="translate(122.500 274.900) scale(0.966 1.017)">匹</text><text transform="translate(241 270.400) scale(0.990 0.969)">配</text><text transform="translate(356.800 271.100) scale(1.036 0.991)">帧</text></g></svg>
</body>
</html>
